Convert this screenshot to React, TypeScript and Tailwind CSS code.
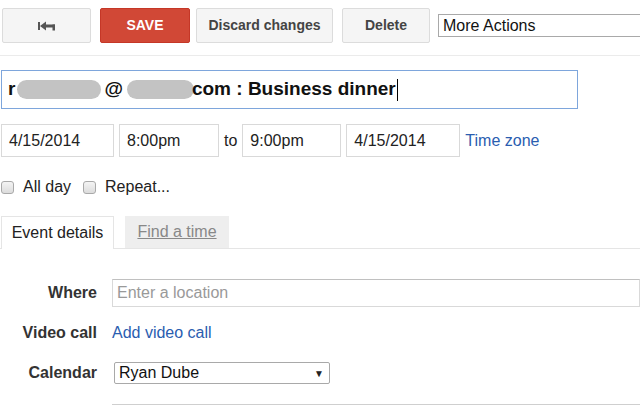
import React from "react";

const inputBox =
  "h-[33px] shrink-0 border border-[#d9d9d9] bg-white flex items-center pl-[7px] text-[16px] text-[#222]";

const toolBtn =
  "shrink-0 h-[35px] rounded-[2px] border border-[#dcdcdc] bg-[#f5f5f5] text-[#444] text-[14px] font-bold";

const Checkbox = () => (
  <span className="inline-block w-[13px] h-[13px] rounded-[3px] border border-[#a9a9a9] bg-gradient-to-b from-[#f4f4f4] to-[#dcdcdc]" />
);

const BackIcon = () => (
  <svg width="18" height="10" viewBox="0 0 18 10" fill="#555">
    <rect x="0" y="1" width="2" height="8" />
    <polygon points="2,5 8,0.5 8,9.5" />
    <rect x="8" y="3.5" width="9" height="3" />
    <rect x="14.5" y="3.5" width="2.5" height="6" />
  </svg>
);

export default function App() {
  return (
    <div className="w-[640px] h-[405px] overflow-hidden bg-white font-['Liberation_Sans',Arial,sans-serif]">
      {/* toolbar */}
      <div className="flex items-start pt-[8px]">
        <button className={`${toolBtn} ml-[2px] w-[89px] flex items-center justify-center`}>
          <BackIcon />
        </button>
        <button className="shrink-0 ml-[9px] w-[90px] h-[35px] rounded-[2px] border border-[#c53727] bg-[#d14836] text-white text-[14px] font-bold">
          SAVE
        </button>
        <button className={`${toolBtn} ml-[6px] w-[137px]`}>Discard changes</button>
        <button className={`${toolBtn} ml-[9px] w-[88px]`}>Delete</button>
        <div className="shrink-0 ml-[8px] mt-[6px] w-[220px] h-[23px] border border-[#a9a9a9] flex items-center pl-[4px] text-[16px] text-[#111]">
          More Actions
        </div>
      </div>
      <div className="mt-[12px] h-px bg-[#ebebeb]" />

      {/* title */}
      <div className="mt-[14px] ml-[1px] w-[577px] h-[39px] border border-[#7ea6dc] flex items-center pl-[6px] text-[19px] font-bold text-[#111]">
        <span>r</span>
        <span className="ml-[2px] w-[84px] h-[19px] rounded-full bg-[#c3c3c3]" />
        <span className="ml-[3px]">@</span>
        <span className="ml-[4px] w-[67px] h-[19px] rounded-full bg-[#c3c3c3]" />
        <span className="ml-[-2px]">com : Business dinner</span>
        <span className="ml-px w-px h-[22px] bg-black" />
      </div>

      {/* dates */}
      <div className="mt-[15px] flex items-center">
        <div className={`${inputBox} ml-[1px] w-[113px]`}>4/15/2014</div>
        <div className={`${inputBox} ml-[5px] w-[100px]`}>8:00pm</div>
        <span className="ml-[5px] text-[16px] text-[#222]">to</span>
        <div className={`${inputBox} ml-[5px] w-[99px]`}>9:00pm</div>
        <div className={`${inputBox} ml-[5px] w-[114px]`}>4/15/2014</div>
        <span className="ml-[5px] text-[16px] text-[#2a5db0]">Time zone</span>
      </div>

      {/* all day / repeat */}
      <div className="mt-[22px] flex items-center h-[16px] text-[16px] text-[#222]">
        <span className="ml-[1px] flex"><Checkbox /></span>
        <span className="ml-[9px]">All day</span>
        <span className="ml-[12px] flex"><Checkbox /></span>
        <span className="ml-[9px]">Repeat...</span>
      </div>

      {/* tabs */}
      <div className="mt-[21px] flex items-end h-[33px] border-b border-[#e5e5e5]">
        <div className="ml-[1px] w-[113px] h-[33px] mb-[-1px] border border-b-0 border-[#e5e5e5] bg-white flex items-center justify-center text-[16px] text-[#222]">
          Event details
        </div>
        <div className="ml-[11px] w-[104px] h-[32px] bg-[#eeeeee] flex items-center justify-center text-[16px] text-[#888] underline">
          Find a time
        </div>
      </div>

      {/* details */}
      <div className="mt-[30px] grid grid-cols-[97px_1fr] gap-x-[15px] items-center text-[16px]">
        <span className="text-right font-bold text-[#333]">Where</span>
        <div className="h-[28px] border border-[#d9d9d9] border-t-[#c0c0c0] flex items-center pl-[4px] text-[#999]">
          Enter a location
        </div>

        <span className="mt-[14px] text-right font-bold text-[#333]">Video call</span>
        <span className="mt-[14px] text-[#2a5db0]">Add video call</span>

        <span className="mt-[16px] text-right font-bold text-[#333]">Calendar</span>
        <div className="mt-[16px] ml-[2px] w-[216px] h-[22px] border border-[#a9a9a9] rounded-[2px] flex items-center justify-between pl-[4px] pr-[5px] text-[#111]">
          <span>Ryan Dube</span>
          <span className="text-[10px] text-[#222]">▼</span>
        </div>

        <span className="self-start mt-[16px] text-right font-bold text-[#333]">Description</span>
        <div className="mt-[19px] h-[40px] border border-[#cfcfcf]" />
      </div>
    </div>
  );
}
